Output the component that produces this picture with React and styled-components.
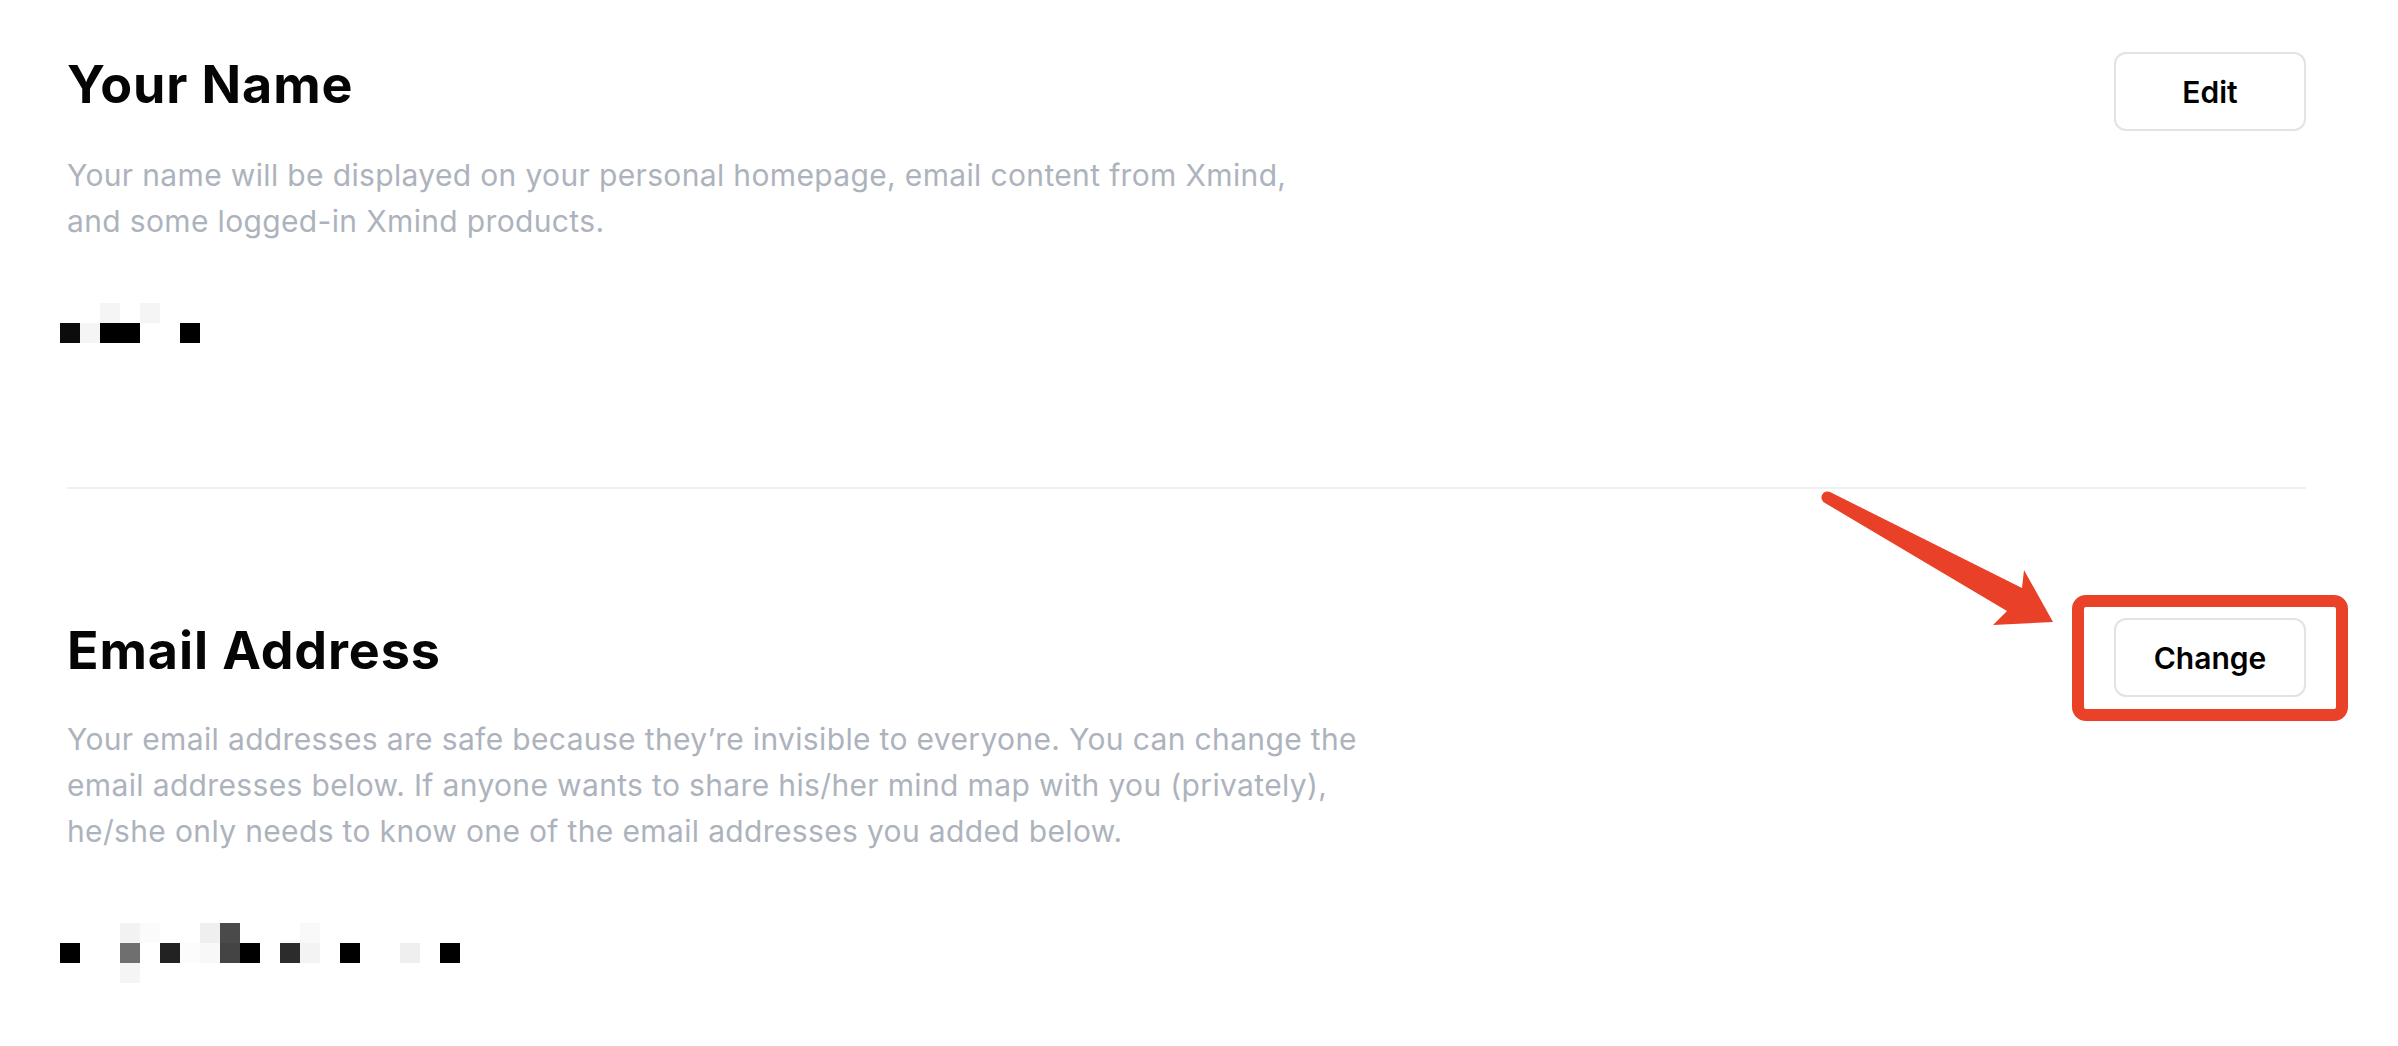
import React from 'react';
import styled, { createGlobalStyle } from 'styled-components';

const GlobalStyle = createGlobalStyle`
  html, body {
    margin: 0;
    padding: 0;
    background: #ffffff;
    font-family: Inter, "Liberation Sans", sans-serif;
  }
`;

const Page = styled.div`
  padding: 0 92px 0 67px;
`;

const Section = styled.section`
  padding-top: ${(p) => p.$top}px;
  padding-bottom: ${(p) => p.$bottom}px;
`;

const Divider = styled.div`
  height: 2px;
  background: #f0f0f0;
`;

const Header = styled.div`
  display: flex;
  justify-content: space-between;
  align-items: flex-start;
`;

const Info = styled.div`
  display: flex;
  flex-direction: column;
`;

const Title = styled.h2`
  margin: 0;
  font-size: 52px;
  line-height: 62px;
  font-weight: 700;
  color: #050505;
  letter-spacing: 0.9px;
`;

const Desc = styled.p`
  margin: ${(p) => p.$gap}px 0 0;
  font-size: 30px;
  line-height: 46px;
  color: #adb3bd;
  letter-spacing: 0.35px;
  white-space: nowrap;
`;

const Button = styled.button`
  width: 192px;
  height: 79px;
  margin-top: -2px;
  background: #ffffff;
  border: 2px solid #e2e2e7;
  border-radius: 12px;
  font-family: Inter, "Liberation Sans", sans-serif;
  font-size: 30px;
  font-weight: 600;
  color: #000000;
  cursor: pointer;
`;

// annotation layer sits over the Change button
const Marked = styled.div`
  position: relative;
  flex-shrink: 0;
`;

const Highlight = styled.div`
  position: absolute;
  top: -25px;
  bottom: -24px;
  left: -42px;
  right: -42px;
  border: 12px solid #ea4129;
  border-radius: 14px;
  pointer-events: none;
`;

const Arrow = styled.svg`
  position: absolute;
  left: -299px;
  top: -137px;
  overflow: visible;
  pointer-events: none;
`;

const Mosaic = styled.div`
  display: grid;
  grid-template-columns: repeat(${(p) => p.$cols}, 20px);
  grid-auto-rows: 20px;
  margin: ${(p) => p.$gap}px 0 0 -7px;
`;

const Cell = styled.div`
  background: ${(p) => p.$c || 'transparent'};
`;

const nameCells = [
  [null, null, '#f5f5f5', null, '#f5f5f5', null, null],
  ['#0c0c0c', '#f5f5f5', '#000', '#000', null, null, '#000'],
];

const emailCells = [
  [null, null, null, '#f2f2f2', '#fbfbfb', null, null, '#efefef', '#4a4a4a', null, null, null, '#f9f9f9', null, null, null, null, null, null, null],
  ['#000', null, null, '#6f6f6f', null, '#222', '#fcfcfc', '#f8f8f8', '#444', '#000', null, '#2c2c2c', '#f3f3f3', null, '#000', null, null, '#efefef', null, '#000'],
  [null, null, null, '#f5f5f5', null, null, null, null, null, null, null, null, null, null, null, null, null, null, null, null],
];

const Redacted = ({ rows, gap }) => (
  <Mosaic $cols={rows[0].length} $gap={gap}>
    {rows.flatMap((row, r) => row.map((c, i) => <Cell key={`${r}-${i}`} $c={c} />))}
  </Mosaic>
);

export default function App() {
  return (
    <Page>
      <GlobalStyle />
      <Section $top={54} $bottom={144}>
        <Header>
          <Info>
            <Title>Your Name</Title>
            <Desc $gap={36}>
              Your name will be displayed on your personal homepage, email content from Xmind,
              <br />
              and some logged-in Xmind products.
            </Desc>
            <Redacted rows={nameCells} gap={59} />
          </Info>
          <Button>Edit</Button>
        </Header>
      </Section>
      <Divider />
      <Section $top={131} $bottom={60}>
        <Header>
          <Info>
            <Title>Email Address</Title>
            <Desc $gap={34}>
              Your email addresses are safe because they’re invisible to everyone. You can change the
              <br />
              email addresses below. If anyone wants to share his/her mind map with you (privately),
              <br />
              he/she only needs to know one of the email addresses you added below.
            </Desc>
            <Redacted rows={emailCells} gap={69} />
          </Info>
          <Marked>
            <Arrow width="245" height="150" viewBox="0 0 245 150">
              <path
                d="M15 9 L207 105 L209 87 L238 139 L178 142 L192 128 L10 20 A6 6 0 0 1 15 9 Z"
                fill="#e94128"
              />
            </Arrow>
            <Button>Change</Button>
            <Highlight />
          </Marked>
        </Header>
      </Section>
    </Page>
  );
}
